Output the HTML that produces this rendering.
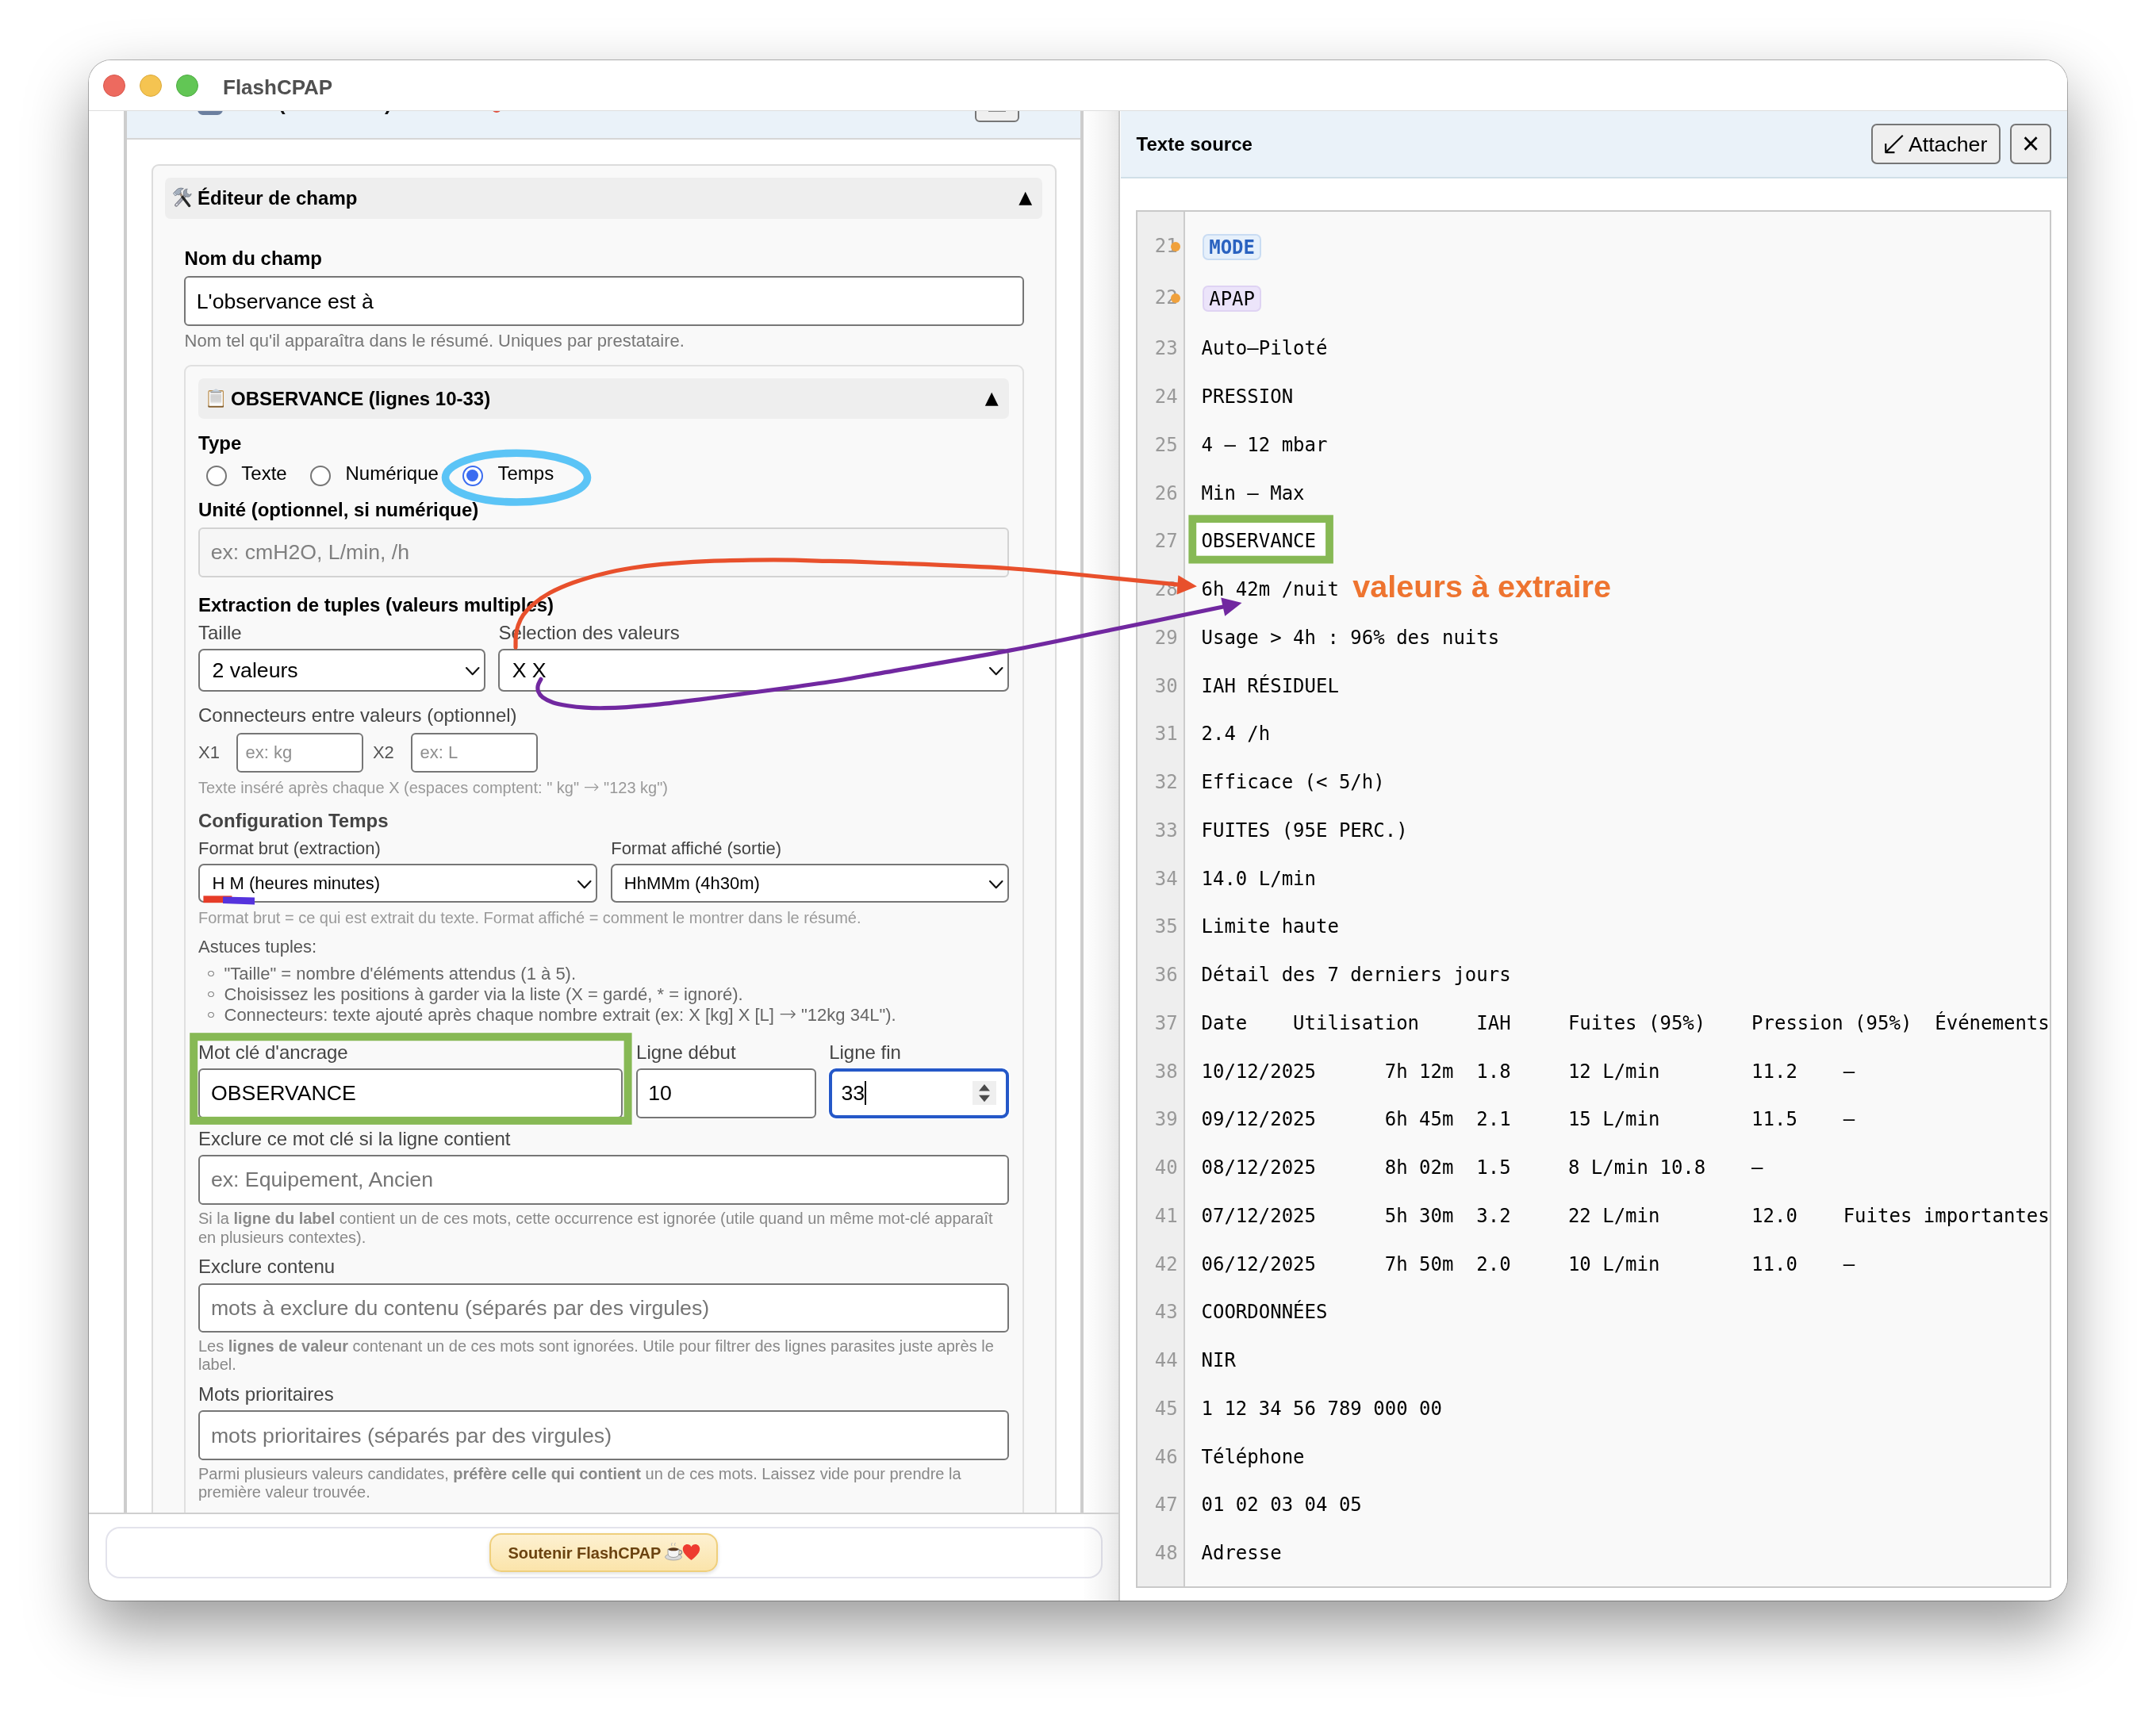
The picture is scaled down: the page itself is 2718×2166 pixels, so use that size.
<!DOCTYPE html>
<html lang="fr"><head><meta charset="utf-8"><title>FlashCPAP</title>
<style>
html,body{margin:0;padding:0}
body{width:2718px;height:2166px;position:relative;overflow:hidden;background:#fff;will-change:transform;font-family:'Liberation Sans', Arial, Helvetica, sans-serif;-webkit-font-smoothing:antialiased}
b{font-weight:bold}
</style></head><body>
<div style="position:absolute;left:112.0px;top:76.0px;width:2494.0px;height:1942.0px;box-sizing:border-box;border-radius:28px;background:#fff;box-shadow:0 0 0 1px rgba(0,0,0,.28),0 35px 80px rgba(0,0,0,.40);"></div><div id="left" style="position:absolute;left:112px;top:139px;width:1299px;height:1768px;overflow:hidden;background:#fff"><div style="position:absolute;left:44.0px;top:-39.0px;width:1210.0px;height:1900.0px;box-sizing:border-box;border-left:4px solid #cdcdcd;border-right:4px solid #cdcdcd;background:#fff;"></div>
<div style="position:absolute;left:48.0px;top:-39.0px;width:1202.0px;height:76.0px;box-sizing:border-box;background:#eaf2f9;border-bottom:2px solid #d6d6d6;"></div>
<div style="position:absolute;left:137.0px;top:-19.0px;width:32.0px;height:25.0px;box-sizing:border-box;background:#6b7f9f;border-radius:7px;"></div>
<div style="position:absolute;left:239.0px;top:-22.5px;font:26px/26px 'Liberation Sans', Arial, Helvetica, sans-serif;font-weight:bold;color:#111;white-space:pre;">(</div>
<div style="position:absolute;left:373.0px;top:-22.5px;font:26px/26px 'Liberation Sans', Arial, Helvetica, sans-serif;font-weight:bold;color:#111;white-space:pre;">)</div>
<div style="position:absolute;left:508.0px;top:-11.0px;width:12.0px;height:14.0px;box-sizing:border-box;background:#e0503f;border-radius:6px;"></div>
<div style="position:absolute;left:1117.0px;top:-29.0px;width:56.0px;height:44.0px;box-sizing:border-box;background:#efefef;border:2px solid #767676;border-radius:6px;"></div>
<div style="position:absolute;left:1134.0px;top:0.0px;width:22.0px;height:2.0px;box-sizing:border-box;background:#888;"></div>
<div style="position:absolute;left:78.6px;top:67.7px;width:1141.8px;height:1893.3px;box-sizing:border-box;background:#f9f9f9;border:2px solid #dcdcdc;border-radius:9px;"></div>
<div style="position:absolute;left:96.0px;top:85.3px;width:1106.2px;height:51.5px;box-sizing:border-box;background:#eeeeee;border-radius:7px;"></div>
<svg style="position:absolute;left:105px;top:97px" width="26" height="26" viewBox="0 0 26 26"><line x1="5.2" y1="22.6" x2="16.6" y2="10.2" stroke="#74747e" stroke-width="4" stroke-linecap="round"/><line x1="5.2" y1="22.6" x2="16.6" y2="10.2" stroke="#a9acb8" stroke-width="2.3" stroke-linecap="round"/><circle cx="5.9" cy="21.9" r="0.95" fill="#f4f4f4"/><path d="M19.3 2.2 A5 5 0 1 0 24.2 8.3 L21.6 9.6 L18.2 7.2 L18.4 3.2 Z" fill="#9aa2b0" stroke="#70767f" stroke-width=".8" stroke-linejoin="round"/><line x1="9.6" y1="7.2" x2="13.6" y2="13" stroke="#9f8f82" stroke-width="3" stroke-linecap="butt"/><line x1="13.2" y1="12.6" x2="21.6" y2="23.4" stroke="#262727" stroke-width="3.3" stroke-linecap="round"/><path d="M1.6 7.6 L3.9 10.9 L6.4 9.2 L8.6 9.8 L11.2 6.6 L10.2 4.5 Q12 3.6 14.3 1.6 Q10.8 0.6 8.2 1.6 Q6.2 2.4 4.4 4.6 Z" fill="#a3aebd" stroke="#6c7480" stroke-width=".8" stroke-linejoin="round"/><path d="M1.6 7.6 L3.9 10.9 L5.4 9.9 L3.1 6.6 Z" fill="#dde5ee" stroke="#7a828e" stroke-width=".6" stroke-linejoin="round"/></svg>
<div style="position:absolute;left:137.0px;top:99.2px;font:24px/24px 'Liberation Sans', Arial, Helvetica, sans-serif;font-weight:bold;color:#000;white-space:pre;">Éditeur de champ</div>
<div style="position:absolute;left:1172.2px;top:99.1px;font:22px/22px 'DejaVu Sans', 'Liberation Sans', sans-serif;color:#000;white-space:pre;">▲</div>
<div style="position:absolute;left:120.6px;top:175.1px;font:24px/24px 'Liberation Sans', Arial, Helvetica, sans-serif;font-weight:bold;color:#000;white-space:pre;">Nom du champ</div>
<div style="position:absolute;left:120.3px;top:209.3px;width:1058.5px;height:62.4px;box-sizing:border-box;background:#fff;border:2px solid #767676;border-radius:6px;"></div>
<div style="position:absolute;left:135.8px;top:227.7px;font:26.67px/26.67px 'Liberation Sans', Arial, Helvetica, sans-serif;color:#000;white-space:pre;">L'observance est à</div>
<div style="position:absolute;left:120.6px;top:280.1px;font:22px/22px 'Liberation Sans', Arial, Helvetica, sans-serif;color:#777;white-space:pre;">Nom tel qu'il apparaîtra dans le résumé. Uniques par prestataire.</div>
<div style="position:absolute;left:120.3px;top:320.6px;width:1058.5px;height:1640.4px;box-sizing:border-box;background:#f9f9f9;border:2px solid #e0e0e0;border-radius:9px;"></div>
<div style="position:absolute;left:138.0px;top:338.0px;width:1021.9px;height:51.3px;box-sizing:border-box;background:#eeeeee;border-radius:7px;"></div>
<svg style="position:absolute;left:150px;top:351px" width="21" height="25" viewBox="0 0 21 25"><defs><linearGradient id="pg" x1="0" y1="0" x2="0" y2="1"><stop offset="0" stop-color="#e9e9e9"/><stop offset=".25" stop-color="#d3d3d3"/><stop offset=".75" stop-color="#d6d6d6"/><stop offset="1" stop-color="#ffffff"/></linearGradient></defs><rect x="0.4" y="2" width="19.6" height="21.6" rx="1.8" fill="#b98c4c"/><rect x="0.4" y="21" width="19.6" height="2.6" rx="1.2" fill="#7e5a2b"/><rect x="1.6" y="3.6" width="17.2" height="18.2" fill="#ffffff"/><rect x="3.2" y="5.4" width="14" height="14.2" fill="url(#pg)"/><path d="M3.6 4 L8.6 1.6 Q10.2 -0.2 11.8 1.6 L16.8 4 Z" fill="#c9d6e2" stroke="#aebccb" stroke-width=".5"/><rect x="3.4" y="4" width="13.6" height="1" fill="#8b8b8b"/></svg>
<div style="position:absolute;left:179.0px;top:352.0px;font:24px/24px 'Liberation Sans', Arial, Helvetica, sans-serif;font-weight:bold;color:#000;white-space:pre;">OBSERVANCE (lignes 10-33)</div>
<div style="position:absolute;left:1129.8px;top:351.8px;font:22px/22px 'DejaVu Sans', 'Liberation Sans', sans-serif;color:#000;white-space:pre;">▲</div>
<div style="position:absolute;left:138.0px;top:408.1px;font:24px/24px 'Liberation Sans', Arial, Helvetica, sans-serif;font-weight:bold;color:#000;white-space:pre;">Type</div>
<div style="position:absolute;left:147.9px;top:447.8px;width:26.0px;height:26.0px;box-sizing:border-box;border-radius:50%;background:#fff;border:2px solid #767676;"></div>
<div style="position:absolute;left:278.9px;top:447.8px;width:26.0px;height:26.0px;box-sizing:border-box;border-radius:50%;background:#fff;border:2px solid #767676;"></div>
<div style="position:absolute;left:471.0px;top:447.8px;width:26.0px;height:26.0px;box-sizing:border-box;border-radius:50%;background:#fff;border:2.5px solid #3b6cf0;"><div style="position:absolute;left:3px;top:3px;width:15px;height:15px;border-radius:50%;background:#3b6cf0"></div></div>
<div style="position:absolute;left:192.3px;top:446.2px;font:24px/24px 'Liberation Sans', Arial, Helvetica, sans-serif;color:#000;white-space:pre;">Texte</div>
<div style="position:absolute;left:323.5px;top:446.2px;font:24px/24px 'Liberation Sans', Arial, Helvetica, sans-serif;color:#000;white-space:pre;">Numérique</div>
<div style="position:absolute;left:515.5px;top:446.2px;font:24px/24px 'Liberation Sans', Arial, Helvetica, sans-serif;color:#000;white-space:pre;">Temps</div>
<div style="position:absolute;left:138.0px;top:492.3px;font:24px/24px 'Liberation Sans', Arial, Helvetica, sans-serif;font-weight:bold;color:#000;white-space:pre;">Unité (optionnel, si numérique)</div>
<div style="position:absolute;left:138.2px;top:526.3px;width:1022.2px;height:62.7px;box-sizing:border-box;background:#f6f6f6;border:2px solid #d2d2d2;border-radius:6px;"></div>
<div style="position:absolute;left:153.7px;top:543.9px;font:26.67px/26.67px 'Liberation Sans', Arial, Helvetica, sans-serif;color:#808080;white-space:pre;">ex: cmH2O, L/min, /h</div>
<div style="position:absolute;left:138.0px;top:611.6px;font:24px/24px 'Liberation Sans', Arial, Helvetica, sans-serif;font-weight:bold;color:#000;white-space:pre;">Extraction de tuples (valeurs multiples)</div>
<div style="position:absolute;left:138.0px;top:647.3px;font:24px/24px 'Liberation Sans', Arial, Helvetica, sans-serif;color:#444;white-space:pre;">Taille</div>
<div style="position:absolute;left:516.6px;top:647.3px;font:24px/24px 'Liberation Sans', Arial, Helvetica, sans-serif;color:#444;white-space:pre;">Selection des valeurs</div>
<div style="position:absolute;left:138.2px;top:679.0px;width:361.4px;height:54.0px;box-sizing:border-box;background:#fff;border:2px solid #767676;border-radius:7px;"></div><div style="position:absolute;left:155.5px;top:693.1px;font:26.67px/26.67px 'Liberation Sans', Arial, Helvetica, sans-serif;color:#000;white-space:pre;">2 valeurs</div><svg style="position:absolute;left:473.6px;top:700.7px" width="19.5" height="12.2" viewBox="-2 -2 19.5 12.2"><path d="M0 0 L7.75 8.2 L15.5 0" fill="none" stroke="#111" stroke-width="2.1" stroke-linecap="round" stroke-linejoin="round"/></svg>
<div style="position:absolute;left:516.3px;top:679.0px;width:644.1px;height:54.0px;box-sizing:border-box;background:#fff;border:2px solid #767676;border-radius:7px;"></div><div style="position:absolute;left:533.7px;top:693.1px;font:26.67px/26.67px 'Liberation Sans', Arial, Helvetica, sans-serif;color:#000;white-space:pre;">X X</div><svg style="position:absolute;left:1134.4px;top:700.7px" width="19.5" height="12.2" viewBox="-2 -2 19.5 12.2"><path d="M0 0 L7.75 8.2 L15.5 0" fill="none" stroke="#111" stroke-width="2.1" stroke-linecap="round" stroke-linejoin="round"/></svg>
<div style="position:absolute;left:138.0px;top:751.0px;font:24px/24px 'Liberation Sans', Arial, Helvetica, sans-serif;color:#444;white-space:pre;">Connecteurs entre valeurs (optionnel)</div>
<div style="position:absolute;left:138.0px;top:799.0px;font:22px/22px 'Liberation Sans', Arial, Helvetica, sans-serif;color:#555;white-space:pre;">X1</div>
<div style="position:absolute;left:186.1px;top:785.4px;width:159.7px;height:49.2px;box-sizing:border-box;background:#fff;border:2px solid #767676;border-radius:6px;"></div>
<div style="position:absolute;left:197.5px;top:799.0px;font:22px/22px 'Liberation Sans', Arial, Helvetica, sans-serif;color:#8e8e8e;white-space:pre;">ex: kg</div>
<div style="position:absolute;left:357.9px;top:799.0px;font:22px/22px 'Liberation Sans', Arial, Helvetica, sans-serif;color:#555;white-space:pre;">X2</div>
<div style="position:absolute;left:406.1px;top:785.4px;width:159.7px;height:49.2px;box-sizing:border-box;background:#fff;border:2px solid #767676;border-radius:6px;"></div>
<div style="position:absolute;left:417.5px;top:799.0px;font:22px/22px 'Liberation Sans', Arial, Helvetica, sans-serif;color:#8e8e8e;white-space:pre;">ex: L</div>
<div style="position:absolute;left:138.0px;top:843.8px;font:20px/20px 'Liberation Sans', Arial, Helvetica, sans-serif;color:#999;white-space:pre;">Texte inséré après chaque X (espaces comptent: " kg" <span style="font-family:'DejaVu Sans Light', 'DejaVu Sans', sans-serif;font-weight:200;font-size:1.19em;line-height:0">→</span> "123 kg")</div>
<div style="position:absolute;left:138.0px;top:884.3px;font:24px/24px 'Liberation Sans', Arial, Helvetica, sans-serif;font-weight:bold;color:#444;white-space:pre;">Configuration Temps</div>
<div style="position:absolute;left:138.0px;top:920.2px;font:22px/22px 'Liberation Sans', Arial, Helvetica, sans-serif;color:#444;white-space:pre;">Format brut (extraction)</div>
<div style="position:absolute;left:658.2px;top:920.2px;font:22px/22px 'Liberation Sans', Arial, Helvetica, sans-serif;color:#444;white-space:pre;">Format affiché (sortie)</div>
<div style="position:absolute;left:138.2px;top:950.3px;width:502.9px;height:49.2px;box-sizing:border-box;background:#fff;border:2px solid #767676;border-radius:7px;"></div><div style="position:absolute;left:155.5px;top:964.2px;font:22px/22px 'Liberation Sans', Arial, Helvetica, sans-serif;color:#000;white-space:pre;">H M (heures minutes)</div><svg style="position:absolute;left:615.1px;top:969.6px" width="19.5" height="12.2" viewBox="-2 -2 19.5 12.2"><path d="M0 0 L7.75 8.2 L15.5 0" fill="none" stroke="#111" stroke-width="2.1" stroke-linecap="round" stroke-linejoin="round"/></svg>
<div style="position:absolute;left:657.5px;top:950.3px;width:502.9px;height:49.2px;box-sizing:border-box;background:#fff;border:2px solid #767676;border-radius:7px;"></div><div style="position:absolute;left:674.8px;top:964.2px;font:22px/22px 'Liberation Sans', Arial, Helvetica, sans-serif;color:#000;white-space:pre;">HhMMm (4h30m)</div><svg style="position:absolute;left:1134.4px;top:969.6px" width="19.5" height="12.2" viewBox="-2 -2 19.5 12.2"><path d="M0 0 L7.75 8.2 L15.5 0" fill="none" stroke="#111" stroke-width="2.1" stroke-linecap="round" stroke-linejoin="round"/></svg>
<div style="position:absolute;left:138.0px;top:1007.7px;font:20px/20px 'Liberation Sans', Arial, Helvetica, sans-serif;color:#999;white-space:pre;">Format brut = ce qui est extrait du texte. Format affiché = comment le montrer dans le résumé.</div>
<div style="position:absolute;left:138.0px;top:1043.8px;font:22px/22px 'Liberation Sans', Arial, Helvetica, sans-serif;color:#555;white-space:pre;">Astuces tuples:</div>
<div style="position:absolute;left:150.0px;top:1084.7px;width:7.5px;height:7.5px;box-sizing:border-box;border:1.5px solid #666;border-radius:50%;"></div>
<div style="position:absolute;left:170.5px;top:1078.0px;font:22px/22px 'Liberation Sans', Arial, Helvetica, sans-serif;color:#666;white-space:pre;">"Taille" = nombre d'éléments attendus (1 à 5).</div>
<div style="position:absolute;left:150.0px;top:1110.8px;width:7.5px;height:7.5px;box-sizing:border-box;border:1.5px solid #666;border-radius:50%;"></div>
<div style="position:absolute;left:170.5px;top:1104.1px;font:22px/22px 'Liberation Sans', Arial, Helvetica, sans-serif;color:#666;white-space:pre;">Choisissez les positions à garder via la liste (X = gardé, * = ignoré).</div>
<div style="position:absolute;left:150.0px;top:1136.9px;width:7.5px;height:7.5px;box-sizing:border-box;border:1.5px solid #666;border-radius:50%;"></div>
<div style="position:absolute;left:170.5px;top:1130.2px;font:22px/22px 'Liberation Sans', Arial, Helvetica, sans-serif;color:#666;white-space:pre;">Connecteurs: texte ajouté après chaque nombre extrait (ex: X [kg] X [L] <span style="font-family:'DejaVu Sans Light', 'DejaVu Sans', sans-serif;font-weight:200;font-size:1.19em;line-height:0">→</span> "12kg 34L").</div>
<div style="position:absolute;left:138.0px;top:1176.4px;font:24px/24px 'Liberation Sans', Arial, Helvetica, sans-serif;color:#444;white-space:pre;">Mot clé d'ancrage</div>
<div style="position:absolute;left:690.1px;top:1176.4px;font:24px/24px 'Liberation Sans', Arial, Helvetica, sans-serif;color:#444;white-space:pre;">Ligne début</div>
<div style="position:absolute;left:933.2px;top:1176.4px;font:24px/24px 'Liberation Sans', Arial, Helvetica, sans-serif;color:#444;white-space:pre;">Ligne fin</div>
<div style="position:absolute;left:138.2px;top:1208.0px;width:535.0px;height:63.0px;box-sizing:border-box;background:#fff;border:2px solid #767676;border-radius:6px;"></div>
<div style="position:absolute;left:154.1px;top:1226.3px;font:26.67px/26.67px 'Liberation Sans', Arial, Helvetica, sans-serif;color:#000;white-space:pre;">OBSERVANCE</div>
<div style="position:absolute;left:689.5px;top:1208.0px;width:227.8px;height:63.0px;box-sizing:border-box;background:#fff;border:2px solid #767676;border-radius:6px;"></div>
<div style="position:absolute;left:705.3px;top:1226.3px;font:26.67px/26.67px 'Liberation Sans', Arial, Helvetica, sans-serif;color:#000;white-space:pre;">10</div>
<div style="position:absolute;left:932.9px;top:1207.8px;width:226.8px;height:62.9px;box-sizing:border-box;background:#fff;border:4px solid #2558c8;border-radius:9px;box-shadow:0 0 0 1.5px #fff;"></div>
<div style="position:absolute;left:948.5px;top:1226.3px;font:26.67px/26.67px 'Liberation Sans', Arial, Helvetica, sans-serif;color:#000;white-space:pre;">33</div>
<div style="position:absolute;left:978.0px;top:1224.0px;width:2.0px;height:30.0px;box-sizing:border-box;background:#000;"></div>
<div style="position:absolute;left:1113.8px;top:1223.8px;width:30.0px;height:30.0px;box-sizing:border-box;background:#efefef;"><svg width="30" height="30" viewBox="0 0 30 30" style="position:absolute;left:0;top:0"><path d="M8 12.4 L15 4 L22 12.4 Z M8 17.8 L15 26.2 L22 17.8 Z" fill="#4a4a4a"/></svg></div>
<div style="position:absolute;left:138.0px;top:1284.9px;font:24px/24px 'Liberation Sans', Arial, Helvetica, sans-serif;color:#444;white-space:pre;">Exclure ce mot clé si la ligne contient</div>
<div style="position:absolute;left:138.2px;top:1317.3px;width:1022.2px;height:62.9px;box-sizing:border-box;background:#fff;border:2px solid #767676;border-radius:6px;"></div>
<div style="position:absolute;left:153.9px;top:1335.3px;font:26.67px/26.67px 'Liberation Sans', Arial, Helvetica, sans-serif;color:#757575;white-space:pre;">ex: Equipement, Ancien</div>
<div style="position:absolute;left:138.0px;top:1387.3px;font:20px/20px 'Liberation Sans', Arial, Helvetica, sans-serif;color:#888;white-space:pre;">Si la <b>ligne du label</b> contient un de ces mots, cette occurrence est ignorée (utile quand un même mot-clé apparaît</div>
<div style="position:absolute;left:138.0px;top:1410.6px;font:20px/20px 'Liberation Sans', Arial, Helvetica, sans-serif;color:#888;white-space:pre;">en plusieurs contextes).</div>
<div style="position:absolute;left:138.0px;top:1445.6px;font:24px/24px 'Liberation Sans', Arial, Helvetica, sans-serif;color:#444;white-space:pre;">Exclure contenu</div>
<div style="position:absolute;left:138.2px;top:1478.6px;width:1022.2px;height:62.4px;box-sizing:border-box;background:#fff;border:2px solid #767676;border-radius:6px;"></div>
<div style="position:absolute;left:153.9px;top:1496.5px;font:26.67px/26.67px 'Liberation Sans', Arial, Helvetica, sans-serif;color:#757575;white-space:pre;">mots à exclure du contenu (séparés par des virgules)</div>
<div style="position:absolute;left:138.0px;top:1548.3px;font:20px/20px 'Liberation Sans', Arial, Helvetica, sans-serif;color:#888;white-space:pre;">Les <b>lignes de valeur</b> contenant un de ces mots sont ignorées. Utile pour filtrer des lignes parasites juste après le</div>
<div style="position:absolute;left:138.0px;top:1571.2px;font:20px/20px 'Liberation Sans', Arial, Helvetica, sans-serif;color:#888;white-space:pre;">label.</div>
<div style="position:absolute;left:138.0px;top:1607.0px;font:24px/24px 'Liberation Sans', Arial, Helvetica, sans-serif;color:#444;white-space:pre;">Mots prioritaires</div>
<div style="position:absolute;left:138.2px;top:1639.4px;width:1022.2px;height:63.0px;box-sizing:border-box;background:#fff;border:2px solid #767676;border-radius:6px;"></div>
<div style="position:absolute;left:153.9px;top:1657.7px;font:26.67px/26.67px 'Liberation Sans', Arial, Helvetica, sans-serif;color:#757575;white-space:pre;">mots prioritaires (séparés par des virgules)</div>
<div style="position:absolute;left:138.0px;top:1709.4px;font:20px/20px 'Liberation Sans', Arial, Helvetica, sans-serif;color:#888;white-space:pre;">Parmi plusieurs valeurs candidates, <b>préfère celle qui contient</b> un de ces mots. Laissez vide pour prendre la</div>
<div style="position:absolute;left:138.0px;top:1732.2px;font:20px/20px 'Liberation Sans', Arial, Helvetica, sans-serif;color:#888;white-space:pre;">première valeur trouvée.</div></div>
<div style="position:absolute;left:112.0px;top:1907.0px;width:1299.0px;height:2.0px;box-sizing:border-box;background:#cfcfcf;"></div><div style="position:absolute;left:132.5px;top:1924.5px;width:1257.1px;height:65.2px;box-sizing:border-box;background:#fff;border:2px solid #e3e3ec;border-radius:18px;"></div><div style="position:absolute;left:617.2px;top:1933.2px;width:287.4px;height:48.8px;box-sizing:border-box;border-radius:15px;border:2px solid #efcf7c;background:linear-gradient(#fdf1d2,#fbe4aa);box-shadow:0 2px 5px rgba(0,0,0,.13);"></div><div style="position:absolute;left:640.4px;top:1947.9px;font:20px/20px 'Liberation Sans', Arial, Helvetica, sans-serif;font-weight:bold;color:#6b4310;white-space:pre;">Soutenir FlashCPAP</div><svg style="position:absolute;left:838px;top:1944px" width="46" height="26" viewBox="0 0 46 26"><ellipse cx="11" cy="19" rx="10.5" ry="4" fill="#d9d9d9" stroke="#9a9a9a" stroke-width=".8"/><path d="M4 9 H18 V14 Q18 19.5 11 19.5 Q4 19.5 4 14 Z" fill="#f4f4f4" stroke="#8d8d8d" stroke-width=".8"/><ellipse cx="11" cy="9.3" rx="6.6" ry="2" fill="#5b3a1e"/><path d="M18 10.5 Q22 10.5 21.5 13.5 Q21 16 17.5 16" fill="none" stroke="#8d8d8d" stroke-width="1.4"/><path d="M9 5 Q7.5 3 9.5 1 M13 5 Q11.5 3 13.5 1" fill="none" stroke="#bbb" stroke-width="1"/><path d="M33.5 23 C25 16.5 22.8 12.5 22.8 8.8 C22.8 5.3 25.4 3 28.4 3 C30.6 3 32.5 4.2 33.5 6.2 C34.5 4.2 36.4 3 38.6 3 C41.6 3 44.2 5.3 44.2 8.8 C44.2 12.5 42 16.5 33.5 23 Z" fill="#ee3b2f"/></svg><div id="right" style="position:absolute;left:1411px;top:139px;width:1195px;height:1879px;overflow:hidden;border-bottom-right-radius:28px;"><div style="position:absolute;left:0.0px;top:0.0px;width:1195.0px;height:1879.0px;box-sizing:border-box;background:#fff;"></div>
<div style="position:absolute;left:1.5px;top:0.0px;width:1193.5px;height:86.0px;box-sizing:border-box;background:#eaf2f9;border-bottom:2px solid #d0dfe8;"></div>
<div style="position:absolute;left:21.6px;top:31.0px;font:24px/24px 'Liberation Sans', Arial, Helvetica, sans-serif;font-weight:bold;color:#000;white-space:pre;">Texte source</div>
<div style="position:absolute;left:947.5px;top:17.4px;width:163.0px;height:50.2px;box-sizing:border-box;background:#efefef;border:2px solid #767676;border-radius:7px;"></div>
<div style="position:absolute;left:959.0px;top:19.6px;font:43px/43px 'DejaVu Sans Light', 'DejaVu Sans', sans-serif;font-weight:200;color:#000;white-space:pre;">↙</div>
<div style="position:absolute;left:995.0px;top:30.3px;font:26.67px/26.67px 'Liberation Sans', Arial, Helvetica, sans-serif;color:#000;white-space:pre;">Attacher</div>
<div style="position:absolute;left:1123.3px;top:17.4px;width:51.3px;height:50.2px;box-sizing:border-box;background:#efefef;border:2px solid #767676;border-radius:7px;"></div>
<div style="position:absolute;left:1137.9px;top:23.2px;font:38px/38px 'Liberation Sans', Arial, Helvetica, sans-serif;color:#000;white-space:pre;">×</div>
<div style="position:absolute;left:21.0px;top:125.6px;width:1153.8px;height:1737.6px;box-sizing:border-box;background:#f9f9f9;border:2px solid #c9c9c9;"></div>
<div style="position:absolute;left:23.0px;top:127.6px;width:60.0px;height:1733.6px;box-sizing:border-box;background:#eeeeee;border-right:2px solid #cccccc;"></div>
<div style="position:absolute;left:92.0px;top:515.0px;width:173.0px;height:52.0px;box-sizing:border-box;background:#fff;"></div>
<div style="position:absolute;left:23.6px;top:158.7px;font:24px/24px 'DejaVu Sans Mono', 'Liberation Mono', monospace;color:#999;white-space:pre;width:50px;text-align:right;">21</div>
<div style="position:absolute;left:23.6px;top:223.7px;font:24px/24px 'DejaVu Sans Mono', 'Liberation Mono', monospace;color:#999;white-space:pre;width:50px;text-align:right;">22</div>
<div style="position:absolute;left:23.6px;top:288.2px;font:24px/24px 'DejaVu Sans Mono', 'Liberation Mono', monospace;color:#999;white-space:pre;width:50px;text-align:right;">23</div>
<div style="position:absolute;left:103.5px;top:288.2px;font:24px/24px 'DejaVu Sans Mono', 'Liberation Mono', monospace;color:#000;white-space:pre;tab-size:8;-moz-tab-size:8;">Auto—Piloté</div>
<div style="position:absolute;left:23.6px;top:349.0px;font:24px/24px 'DejaVu Sans Mono', 'Liberation Mono', monospace;color:#999;white-space:pre;width:50px;text-align:right;">24</div>
<div style="position:absolute;left:103.5px;top:349.0px;font:24px/24px 'DejaVu Sans Mono', 'Liberation Mono', monospace;color:#000;white-space:pre;tab-size:8;-moz-tab-size:8;">PRESSION</div>
<div style="position:absolute;left:23.6px;top:409.7px;font:24px/24px 'DejaVu Sans Mono', 'Liberation Mono', monospace;color:#999;white-space:pre;width:50px;text-align:right;">25</div>
<div style="position:absolute;left:103.5px;top:409.7px;font:24px/24px 'DejaVu Sans Mono', 'Liberation Mono', monospace;color:#000;white-space:pre;tab-size:8;-moz-tab-size:8;">4 – 12 mbar</div>
<div style="position:absolute;left:23.6px;top:470.5px;font:24px/24px 'DejaVu Sans Mono', 'Liberation Mono', monospace;color:#999;white-space:pre;width:50px;text-align:right;">26</div>
<div style="position:absolute;left:103.5px;top:470.5px;font:24px/24px 'DejaVu Sans Mono', 'Liberation Mono', monospace;color:#000;white-space:pre;tab-size:8;-moz-tab-size:8;">Min – Max</div>
<div style="position:absolute;left:23.6px;top:531.2px;font:24px/24px 'DejaVu Sans Mono', 'Liberation Mono', monospace;color:#999;white-space:pre;width:50px;text-align:right;">27</div>
<div style="position:absolute;left:103.5px;top:531.2px;font:24px/24px 'DejaVu Sans Mono', 'Liberation Mono', monospace;color:#000;white-space:pre;tab-size:8;-moz-tab-size:8;">OBSERVANCE</div>
<div style="position:absolute;left:23.6px;top:592.0px;font:24px/24px 'DejaVu Sans Mono', 'Liberation Mono', monospace;color:#999;white-space:pre;width:50px;text-align:right;">28</div>
<div style="position:absolute;left:103.5px;top:592.0px;font:24px/24px 'DejaVu Sans Mono', 'Liberation Mono', monospace;color:#000;white-space:pre;tab-size:8;-moz-tab-size:8;">6h 42m /nuit</div>
<div style="position:absolute;left:23.6px;top:652.8px;font:24px/24px 'DejaVu Sans Mono', 'Liberation Mono', monospace;color:#999;white-space:pre;width:50px;text-align:right;">29</div>
<div style="position:absolute;left:103.5px;top:652.8px;font:24px/24px 'DejaVu Sans Mono', 'Liberation Mono', monospace;color:#000;white-space:pre;tab-size:8;-moz-tab-size:8;">Usage &gt; 4h : 96% des nuits</div>
<div style="position:absolute;left:23.6px;top:713.5px;font:24px/24px 'DejaVu Sans Mono', 'Liberation Mono', monospace;color:#999;white-space:pre;width:50px;text-align:right;">30</div>
<div style="position:absolute;left:103.5px;top:713.5px;font:24px/24px 'DejaVu Sans Mono', 'Liberation Mono', monospace;color:#000;white-space:pre;tab-size:8;-moz-tab-size:8;">IAH RÉSIDUEL</div>
<div style="position:absolute;left:23.6px;top:774.3px;font:24px/24px 'DejaVu Sans Mono', 'Liberation Mono', monospace;color:#999;white-space:pre;width:50px;text-align:right;">31</div>
<div style="position:absolute;left:103.5px;top:774.3px;font:24px/24px 'DejaVu Sans Mono', 'Liberation Mono', monospace;color:#000;white-space:pre;tab-size:8;-moz-tab-size:8;">2.4 /h</div>
<div style="position:absolute;left:23.6px;top:835.0px;font:24px/24px 'DejaVu Sans Mono', 'Liberation Mono', monospace;color:#999;white-space:pre;width:50px;text-align:right;">32</div>
<div style="position:absolute;left:103.5px;top:835.0px;font:24px/24px 'DejaVu Sans Mono', 'Liberation Mono', monospace;color:#000;white-space:pre;tab-size:8;-moz-tab-size:8;">Efficace (&lt; 5/h)</div>
<div style="position:absolute;left:23.6px;top:895.8px;font:24px/24px 'DejaVu Sans Mono', 'Liberation Mono', monospace;color:#999;white-space:pre;width:50px;text-align:right;">33</div>
<div style="position:absolute;left:103.5px;top:895.8px;font:24px/24px 'DejaVu Sans Mono', 'Liberation Mono', monospace;color:#000;white-space:pre;tab-size:8;-moz-tab-size:8;">FUITES (95E PERC.)</div>
<div style="position:absolute;left:23.6px;top:956.6px;font:24px/24px 'DejaVu Sans Mono', 'Liberation Mono', monospace;color:#999;white-space:pre;width:50px;text-align:right;">34</div>
<div style="position:absolute;left:103.5px;top:956.6px;font:24px/24px 'DejaVu Sans Mono', 'Liberation Mono', monospace;color:#000;white-space:pre;tab-size:8;-moz-tab-size:8;">14.0 L/min</div>
<div style="position:absolute;left:23.6px;top:1017.3px;font:24px/24px 'DejaVu Sans Mono', 'Liberation Mono', monospace;color:#999;white-space:pre;width:50px;text-align:right;">35</div>
<div style="position:absolute;left:103.5px;top:1017.3px;font:24px/24px 'DejaVu Sans Mono', 'Liberation Mono', monospace;color:#000;white-space:pre;tab-size:8;-moz-tab-size:8;">Limite haute</div>
<div style="position:absolute;left:23.6px;top:1078.1px;font:24px/24px 'DejaVu Sans Mono', 'Liberation Mono', monospace;color:#999;white-space:pre;width:50px;text-align:right;">36</div>
<div style="position:absolute;left:103.5px;top:1078.1px;font:24px/24px 'DejaVu Sans Mono', 'Liberation Mono', monospace;color:#000;white-space:pre;tab-size:8;-moz-tab-size:8;">Détail des 7 derniers jours</div>
<div style="position:absolute;left:23.6px;top:1138.8px;font:24px/24px 'DejaVu Sans Mono', 'Liberation Mono', monospace;color:#999;white-space:pre;width:50px;text-align:right;">37</div>
<div style="position:absolute;left:103.5px;top:1138.8px;font:24px/24px 'DejaVu Sans Mono', 'Liberation Mono', monospace;color:#000;white-space:pre;tab-size:8;-moz-tab-size:8;">Date	Utilisation	IAH	Fuites (95%)	Pression (95%)	Événements</div>
<div style="position:absolute;left:23.6px;top:1199.6px;font:24px/24px 'DejaVu Sans Mono', 'Liberation Mono', monospace;color:#999;white-space:pre;width:50px;text-align:right;">38</div>
<div style="position:absolute;left:103.5px;top:1199.6px;font:24px/24px 'DejaVu Sans Mono', 'Liberation Mono', monospace;color:#000;white-space:pre;tab-size:8;-moz-tab-size:8;">10/12/2025	7h 12m	1.8	12 L/min	11.2	–</div>
<div style="position:absolute;left:23.6px;top:1260.4px;font:24px/24px 'DejaVu Sans Mono', 'Liberation Mono', monospace;color:#999;white-space:pre;width:50px;text-align:right;">39</div>
<div style="position:absolute;left:103.5px;top:1260.4px;font:24px/24px 'DejaVu Sans Mono', 'Liberation Mono', monospace;color:#000;white-space:pre;tab-size:8;-moz-tab-size:8;">09/12/2025	6h 45m	2.1	15 L/min	11.5	–</div>
<div style="position:absolute;left:23.6px;top:1321.1px;font:24px/24px 'DejaVu Sans Mono', 'Liberation Mono', monospace;color:#999;white-space:pre;width:50px;text-align:right;">40</div>
<div style="position:absolute;left:103.5px;top:1321.1px;font:24px/24px 'DejaVu Sans Mono', 'Liberation Mono', monospace;color:#000;white-space:pre;tab-size:8;-moz-tab-size:8;">08/12/2025	8h 02m	1.5	8 L/min 10.8	–</div>
<div style="position:absolute;left:23.6px;top:1381.9px;font:24px/24px 'DejaVu Sans Mono', 'Liberation Mono', monospace;color:#999;white-space:pre;width:50px;text-align:right;">41</div>
<div style="position:absolute;left:103.5px;top:1381.9px;font:24px/24px 'DejaVu Sans Mono', 'Liberation Mono', monospace;color:#000;white-space:pre;tab-size:8;-moz-tab-size:8;">07/12/2025	5h 30m	3.2	22 L/min	12.0	Fuites importantes</div>
<div style="position:absolute;left:23.6px;top:1442.6px;font:24px/24px 'DejaVu Sans Mono', 'Liberation Mono', monospace;color:#999;white-space:pre;width:50px;text-align:right;">42</div>
<div style="position:absolute;left:103.5px;top:1442.6px;font:24px/24px 'DejaVu Sans Mono', 'Liberation Mono', monospace;color:#000;white-space:pre;tab-size:8;-moz-tab-size:8;">06/12/2025	7h 50m	2.0	10 L/min	11.0	–</div>
<div style="position:absolute;left:23.6px;top:1503.4px;font:24px/24px 'DejaVu Sans Mono', 'Liberation Mono', monospace;color:#999;white-space:pre;width:50px;text-align:right;">43</div>
<div style="position:absolute;left:103.5px;top:1503.4px;font:24px/24px 'DejaVu Sans Mono', 'Liberation Mono', monospace;color:#000;white-space:pre;tab-size:8;-moz-tab-size:8;">COORDONNÉES</div>
<div style="position:absolute;left:23.6px;top:1564.2px;font:24px/24px 'DejaVu Sans Mono', 'Liberation Mono', monospace;color:#999;white-space:pre;width:50px;text-align:right;">44</div>
<div style="position:absolute;left:103.5px;top:1564.2px;font:24px/24px 'DejaVu Sans Mono', 'Liberation Mono', monospace;color:#000;white-space:pre;tab-size:8;-moz-tab-size:8;">NIR</div>
<div style="position:absolute;left:23.6px;top:1624.9px;font:24px/24px 'DejaVu Sans Mono', 'Liberation Mono', monospace;color:#999;white-space:pre;width:50px;text-align:right;">45</div>
<div style="position:absolute;left:103.5px;top:1624.9px;font:24px/24px 'DejaVu Sans Mono', 'Liberation Mono', monospace;color:#000;white-space:pre;tab-size:8;-moz-tab-size:8;">1 12 34 56 789 000 00</div>
<div style="position:absolute;left:23.6px;top:1685.7px;font:24px/24px 'DejaVu Sans Mono', 'Liberation Mono', monospace;color:#999;white-space:pre;width:50px;text-align:right;">46</div>
<div style="position:absolute;left:103.5px;top:1685.7px;font:24px/24px 'DejaVu Sans Mono', 'Liberation Mono', monospace;color:#000;white-space:pre;tab-size:8;-moz-tab-size:8;">Téléphone</div>
<div style="position:absolute;left:23.6px;top:1746.4px;font:24px/24px 'DejaVu Sans Mono', 'Liberation Mono', monospace;color:#999;white-space:pre;width:50px;text-align:right;">47</div>
<div style="position:absolute;left:103.5px;top:1746.4px;font:24px/24px 'DejaVu Sans Mono', 'Liberation Mono', monospace;color:#000;white-space:pre;tab-size:8;-moz-tab-size:8;">01 02 03 04 05</div>
<div style="position:absolute;left:23.6px;top:1807.2px;font:24px/24px 'DejaVu Sans Mono', 'Liberation Mono', monospace;color:#999;white-space:pre;width:50px;text-align:right;">48</div>
<div style="position:absolute;left:103.5px;top:1807.2px;font:24px/24px 'DejaVu Sans Mono', 'Liberation Mono', monospace;color:#000;white-space:pre;tab-size:8;-moz-tab-size:8;">Adresse</div>
<div style="position:absolute;left:105.3px;top:156.3px;width:73.4px;height:33.0px;box-sizing:border-box;background:#e6f0fb;border:2px solid #c9dcf3;border-radius:7px;"></div>
<div style="position:absolute;left:113.2px;top:160.7px;font:24px/24px 'DejaVu Sans Mono', 'Liberation Mono', monospace;font-weight:bold;color:#2a62c0;white-space:pre;">MODE</div>
<div style="position:absolute;left:105.3px;top:221.3px;width:73.4px;height:33.0px;box-sizing:border-box;background:#ece4fa;border:2px solid #dfd3f3;border-radius:7px;"></div>
<div style="position:absolute;left:113.2px;top:225.7px;font:24px/24px 'DejaVu Sans Mono', 'Liberation Mono', monospace;color:#000;white-space:pre;">APAP</div>
<div style="position:absolute;left:64.7px;top:166.0px;width:12.0px;height:12.0px;box-sizing:border-box;background:#f0a13c;border-radius:50%;"></div>
<div style="position:absolute;left:64.7px;top:231.0px;width:12.0px;height:12.0px;box-sizing:border-box;background:#f0a13c;border-radius:50%;"></div></div>
<div style="position:absolute;left:1366.0px;top:139.0px;width:44.0px;height:1879.0px;box-sizing:border-box;background:linear-gradient(90deg,rgba(0,0,0,.004) 0%,rgba(0,0,0,.02) 27%,rgba(0,0,0,.051) 68%,rgba(0,0,0,.09) 100%);"></div><div style="position:absolute;left:1366.0px;top:1907.0px;width:44.0px;height:2.0px;box-sizing:border-box;background:#cfcfcf;"></div><div style="position:absolute;left:1410.0px;top:139.0px;width:2.0px;height:1879.0px;box-sizing:border-box;background:#cacaca;"></div><div style="position:absolute;left:112.0px;top:76.0px;width:2494.0px;height:63.5px;box-sizing:border-box;background:#fff;border-radius:28px 28px 0 0;border-bottom:1.5px solid #dedede;"></div><div style="position:absolute;left:130.0px;top:94.0px;width:28.0px;height:28.0px;box-sizing:border-box;border-radius:50%;background:#ed6a5f;border:1px solid #d8564c;"></div><div style="position:absolute;left:176.0px;top:94.0px;width:28.0px;height:28.0px;box-sizing:border-box;border-radius:50%;background:#f5c451;border:1px solid #dcaa3a;"></div><div style="position:absolute;left:222.0px;top:94.0px;width:28.0px;height:28.0px;box-sizing:border-box;border-radius:50%;background:#62c655;border:1px solid #4dab42;"></div><div style="position:absolute;left:281.0px;top:97.1px;font:26px/26px 'Liberation Sans', Arial, Helvetica, sans-serif;font-weight:bold;color:#505050;white-space:pre;">FlashCPAP</div><svg style="position:absolute;left:0;top:0;pointer-events:none" width="2718" height="2166" viewBox="0 0 2718 2166"><ellipse cx="651" cy="602.1" rx="89.5" ry="30.9" fill="none" stroke="#5bc4f6" stroke-width="9.6"/><rect x="244.2" y="1307.2" width="547.4" height="105.7" fill="none" stroke="#87b955" stroke-width="10"/><rect x="1503.3" y="654.2" width="172.7" height="51.4" fill="none" stroke="#87b955" stroke-width="9.8"/><rect x="256.4" y="1129.4" width="36" height="8.8" fill="#e63c28"/><path d="M281 1130.4 L321 1131.6 L321 1140.4 L281 1139 Z" fill="#5533dd"/><path d="M650.0 816.2 C650.1 813.7 649.9 805.9 650.4 801.3 C650.9 796.6 651.7 792.6 653.2 788.3 C654.8 784.0 656.5 779.8 659.7 775.3 C663.0 770.8 667.1 766.0 672.7 761.4 C678.3 756.8 684.8 752.0 693.1 747.5 C701.5 743.0 711.7 738.5 722.8 734.5 C733.9 730.5 747.5 726.5 759.9 723.4 C772.3 720.3 784.6 718.0 797.0 716.0 C809.4 714.0 818.6 712.7 834.1 711.3 C849.6 709.9 871.2 708.5 889.7 707.6 C908.2 706.7 926.9 706.4 945.4 706.1 C963.9 705.9 986.9 705.9 1001.0 706.1 C1015.1 706.3 1013.5 706.6 1030.0 707.1 C1046.5 707.6 1059.8 707.4 1100.0 709.0 C1140.2 710.6 1221.0 713.2 1271.0 716.5 C1321.0 719.8 1364.2 725.0 1400.0 728.5 C1435.8 732.0 1471.7 735.8 1486.0 737.2" fill="none" stroke="#e8502c" stroke-width="5.2" stroke-linecap="round"/><path d="M1508.9 739.2 L1485.4 725.2 L1483.5 749.4 Z" fill="#e8502c"/><path d="M681.9 856.3 C681.3 857.6 678.8 861.7 678.2 864.3 C677.7 866.9 677.6 869.2 678.6 871.7 C679.6 874.2 681.0 876.9 684.1 879.2 C687.2 881.5 691.8 884.0 697.1 885.7 C702.4 887.5 708.9 888.6 715.7 889.7 C722.5 890.8 730.2 891.7 737.9 892.2 C745.6 892.7 753.3 892.8 762.0 892.7 C770.7 892.6 779.1 892.3 789.9 891.6 C800.7 890.9 811.5 890.0 827.0 888.4 C842.5 886.8 864.1 884.2 882.6 881.9 C901.1 879.6 919.7 877.0 938.3 874.5 C956.9 872.0 973.7 869.9 994.0 867.1 C1014.3 864.3 1042.3 860.3 1060.0 857.5 C1077.7 854.7 1064.8 856.7 1100.0 850.5 C1135.2 844.3 1221.4 829.8 1271.4 820.4 C1321.4 811.0 1354.9 803.5 1400.0 794.3 C1445.1 785.1 1518.3 769.9 1542.0 765.0" fill="none" stroke="#7128a0" stroke-width="5.2" stroke-linecap="round"/><path d="M1565.5 760.1 L1539.2 753.5 L1544.2 776.8 Z" fill="#7128a0"/></svg>
<div style="position:absolute;left:1705.3px;top:720.4px;font:39.6px/39.6px 'Liberation Sans', Arial, Helvetica, sans-serif;font-weight:bold;color:#ee7430;white-space:pre;">valeurs à extraire</div></body></html>
